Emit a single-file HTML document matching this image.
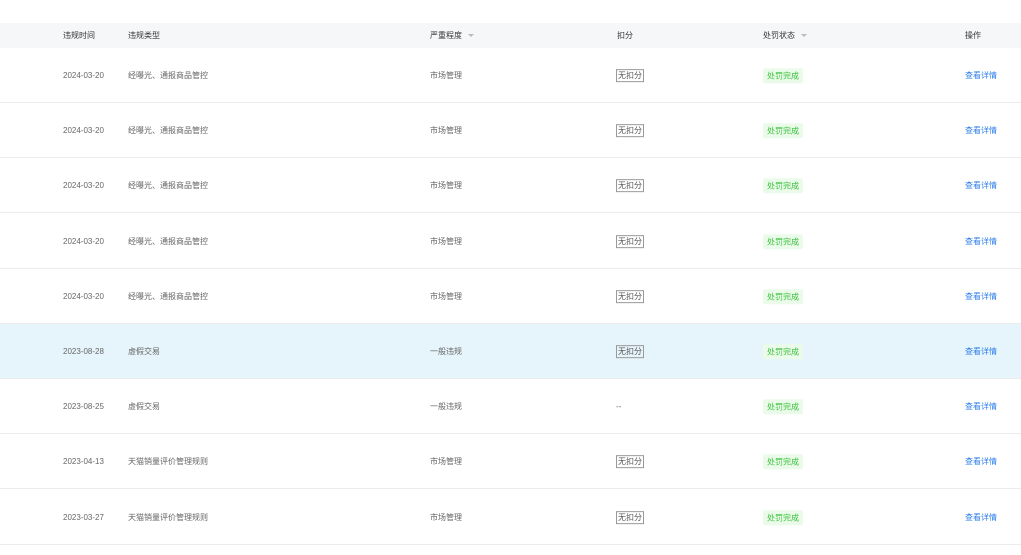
<!DOCTYPE html>
<html><head><meta charset="utf-8"><style>
body{margin:0;width:1021px;height:555px;background:#fff;font-family:"Liberation Sans","Noto Sans CJK SC",sans-serif;font-size:8px;color:#666;overflow:hidden;position:relative}
.hd{position:absolute;left:0;top:23px;width:1021px;height:25px;background:#f6f7f9;color:#333}
.row{position:absolute;left:0;width:1021px;height:55px;border-bottom:1px solid #ececec;box-sizing:border-box}
.c{position:absolute;top:50%;transform:translateY(-45%);white-space:nowrap}
.hd .c{top:12px}
.f{display:inline-block;width:0;height:0;border-left:3px solid transparent;border-right:3px solid transparent;border-top:3px solid #bbb;margin-left:6px;vertical-align:middle}
.box{border:1px solid #999;padding:1px 1px;color:#555;line-height:9px}
.tag{background:#eafbea;color:#3cc03c;padding:3px 4px;border-radius:2px;line-height:9px}
.lk{color:#2b7de9}
.hl{background:#e6f4fb}
</style></head><body>
<div class="hd"><span class="c" style="left:63px">违规时间</span><span class="c" style="left:128px">违规类型</span><span class="c" style="left:430px">严重程度<i class="f"></i></span><span class="c" style="left:617px">扣分</span><span class="c" style="left:763px">处罚状态<i class="f"></i></span><span class="c" style="left:965px">操作</span></div>
<div id="rows"></div>
<script>
var d=[["2024-03-20","经曝光、通报商品管控","市场管理",1],["2024-03-20","经曝光、通报商品管控","市场管理",1],["2024-03-20","经曝光、通报商品管控","市场管理",1],["2024-03-20","经曝光、通报商品管控","市场管理",1],["2024-03-20","经曝光、通报商品管控","市场管理",1],["2023-08-28","虚假交易","一般违规",1],["2023-08-25","虚假交易","一般违规",0],["2023-04-13","天猫销量评价管理规则","市场管理",1],["2023-03-27","天猫销量评价管理规则","市场管理",1]];
var h="";d.forEach(function(r,i){h+='<div class="row'+(i==5?' hl':'')+'" style="top:'+(48+i*55.2)+'px"><span class="c" style="left:63px">'+r[0]+'</span><span class="c" style="left:128px">'+r[1]+'</span><span class="c" style="left:430px">'+r[2]+'</span><span class="c '+(r[3]?'box':'')+'" style="left:616px">'+(r[3]?'无扣分':'--')+'</span><span class="c tag" style="left:763px">处罚完成</span><span class="c lk" style="left:965px">查看详情</span></div>'});
document.getElementById("rows").innerHTML=h;
</script>
</body></html>
